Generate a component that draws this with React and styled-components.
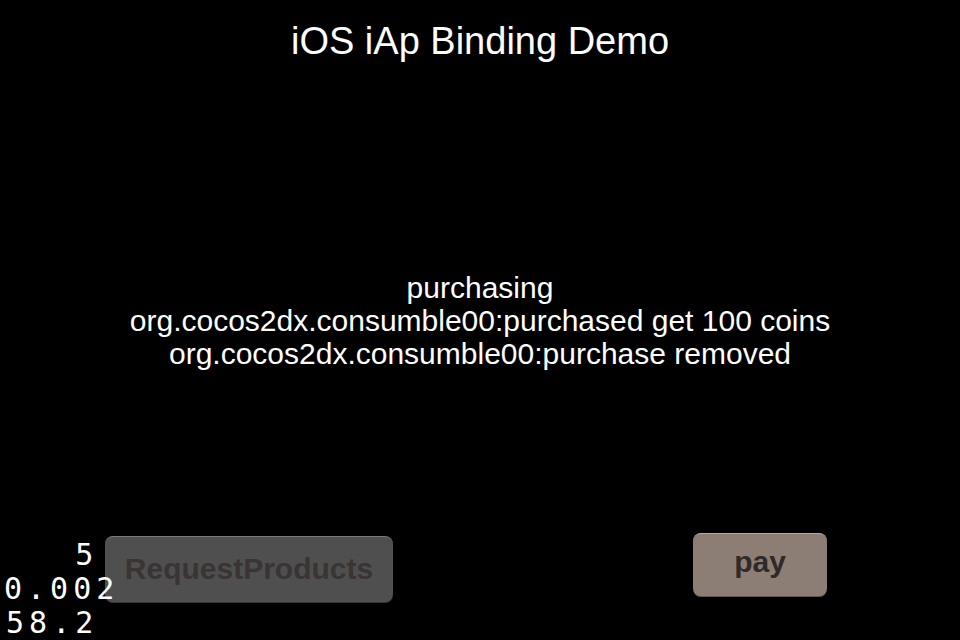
import React from "react";
import styled, { createGlobalStyle } from "styled-components";

const Global = createGlobalStyle`
  html, body { margin: 0; padding: 0; background: #000; }
  body { width: 960px; height: 640px; overflow: hidden; }
`;

const Screen = styled.div`
  position: relative;
  width: 960px;
  height: 640px;
  background: #000;
  display: flex;
  flex-direction: column;
  font-family: "Liberation Sans", Arial, sans-serif;
  color: #fff;
`;

const Title = styled.h1`
  margin: 0;
  padding-top: 19px;
  height: 44px;
  font-size: 38px;
  font-weight: normal;
  line-height: 44px;
  text-align: center;
`;

const Log = styled.div`
  margin-top: 208px;
  display: flex;
  flex-direction: column;
  align-items: center;
  font-size: 30px;
  line-height: 33px;
`;

const ButtonRow = styled.div`
  margin-top: auto;
  margin-bottom: 37px;
  display: flex;
  align-items: flex-start;
  padding-left: 105px;
  padding-right: 133px;
  justify-content: space-between;
`;

const Btn = styled.div`
  box-sizing: border-box;
  width: ${(p) => p.$w}px;
  height: ${(p) => p.$h}px;
  margin-top: ${(p) => p.$top || 0}px;
  border-radius: 8px;
  background: ${(p) => p.$bg};
  border-top: 1px solid ${(p) => p.$edge};
  box-shadow: inset 0 -1px 0 rgba(0,0,0,0.3);
  display: flex;
  align-items: center;
  justify-content: center;
  font-family: "Liberation Sans", Arial, sans-serif;
  font-weight: bold;
  font-size: ${(p) => p.$fs}px;
  color: ${(p) => p.$fg};
  padding-bottom: ${(p) => p.$pb || 0}px;
`;

const Stats = styled.div`
  position: absolute;
  left: 4px;
  bottom: 0px;
  display: flex;
  flex-direction: column;
  align-items: flex-end;
  font-family: "DejaVu Sans Mono", monospace;
  font-size: 30px;
  line-height: 34px;
  letter-spacing: 5px;
  color: #fff;
`;

const StatLine = styled.div`
  margin-right: ${(p) => p.$mr || 0}px;
`;

export default function App() {
  return (
    <Screen>
      <Global />
      <Title>iOS iAp Binding Demo</Title>
      <Log>
        <div>purchasing</div>
        <div>org.cocos2dx.consumble00:purchased get 100 coins</div>
        <div>org.cocos2dx.consumble00:purchase removed</div>
      </Log>
      <ButtonRow>
        <Btn $w={288} $h={67} $top={3} $bg="#4f4f4f" $edge="#7a7a7a" $fg="#3a3434" $fs={30} $pb={2}>
          RequestProducts
        </Btn>
        <Btn $w={134} $h={64} $bg="#8c7e74" $edge="#b8aca3" $fg="#2f2a28" $fs={30} $pb={8}>
          pay
        </Btn>
      </ButtonRow>
      <Stats>
        <StatLine $mr={21}>5</StatLine>
        <StatLine>0.002</StatLine>
        <StatLine $mr={21}>58.2</StatLine>
      </Stats>
    </Screen>
  );
}
